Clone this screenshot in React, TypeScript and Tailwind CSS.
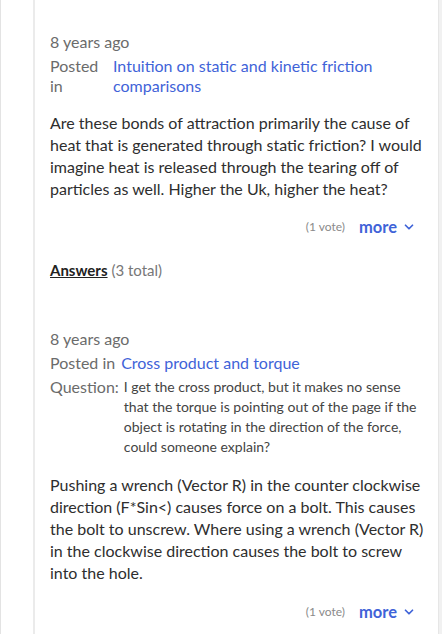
import { ChevronDown } from 'lucide-react';

const font = { fontFamily: 'Lato, "Open Sans", sans-serif' };

const MoreRow = () => (
  <div className="flex items-center justify-end gap-[14px] pr-[22px]">
    <span className="text-[12px] text-[#8a8a8a]">(1 vote)</span>
    <span className="flex items-center gap-[5px] text-[16.5px] font-bold text-[#3f63d8]">
      more
      <ChevronDown className="w-[14px] h-[14px]" strokeWidth={3} />
    </span>
  </div>
);

export default function App() {
  return (
    <div className="flex h-[634px] w-[442px] bg-white overflow-hidden text-[#333]" style={font}>
      <div className="w-[35px] shrink-0 border-l border-[#e3e3e3] border-r-2 border-r-[#ebebeb]" />
      <div className="flex-1 pl-[15px] pt-[32px]">
        <section>
          <p className="text-[16px] leading-[20px] text-[#6b6b6b]">8 years ago</p>
          <div className="mt-[4px] flex gap-[14px] text-[16px] leading-[20px]">
            <span className="w-[49px] shrink-0 text-[#6b6b6b]">Posted in</span>
            <a className="text-[#3f63d8]">Intuition on static and kinetic friction comparisons</a>
          </div>
          <p className="mt-[16px] pr-[13px] text-[16px] leading-[22px] text-[#2e2e2e]">
            Are these bonds of attraction primarily the cause of heat that is generated through static friction? I would
            imagine heat is released through the tearing off of particles as well. Higher the Uk, higher the heat?
          </p>
          <div className="mt-[15px]">
            <MoreRow />
          </div>
        </section>

        <p className="mt-[20px] text-[15px] leading-[20px]">
          <span className="font-bold underline text-[#222]">Answers</span>{' '}
          <span className="text-[#777]">(3 total)</span>
        </p>

        <section className="mt-[49px]">
          <p className="text-[16px] leading-[20px] text-[#6b6b6b]">8 years ago</p>
          <div className="mt-[4px] flex gap-[6px] text-[16px] leading-[20px]">
            <span className="shrink-0 text-[#6b6b6b]">Posted in</span>
            <a className="text-[#3f63d8]">Cross product and torque</a>
          </div>
          <div className="mt-[4px] flex gap-[5px]">
            <span className="shrink-0 text-[16px] leading-[20px] text-[#6b6b6b]">Question:</span>
            <p className="pr-[12px] text-[14px] leading-[20px] text-[#444]">
              I get the cross product, but it makes no sense that the torque is pointing out of the page if the object is
              rotating in the direction of the force, could someone explain?
            </p>
          </div>
          <p className="mt-[17px] pr-[13px] text-[16px] leading-[22px] text-[#2e2e2e]">
            Pushing a wrench (Vector R) in the counter clockwise direction (F*Sin&lt;) causes force on a bolt. This causes
            the bolt to unscrew. Where using a wrench (Vector R) in the clockwise direction causes the bolt to screw into
            the hole.
          </p>
          <div className="mt-[16px]">
            <MoreRow />
          </div>
        </section>
      </div>
      <div className="w-[4px] shrink-0 bg-[#f1f1f1] border-l border-[#e6e6e6]" />
    </div>
  );
}
